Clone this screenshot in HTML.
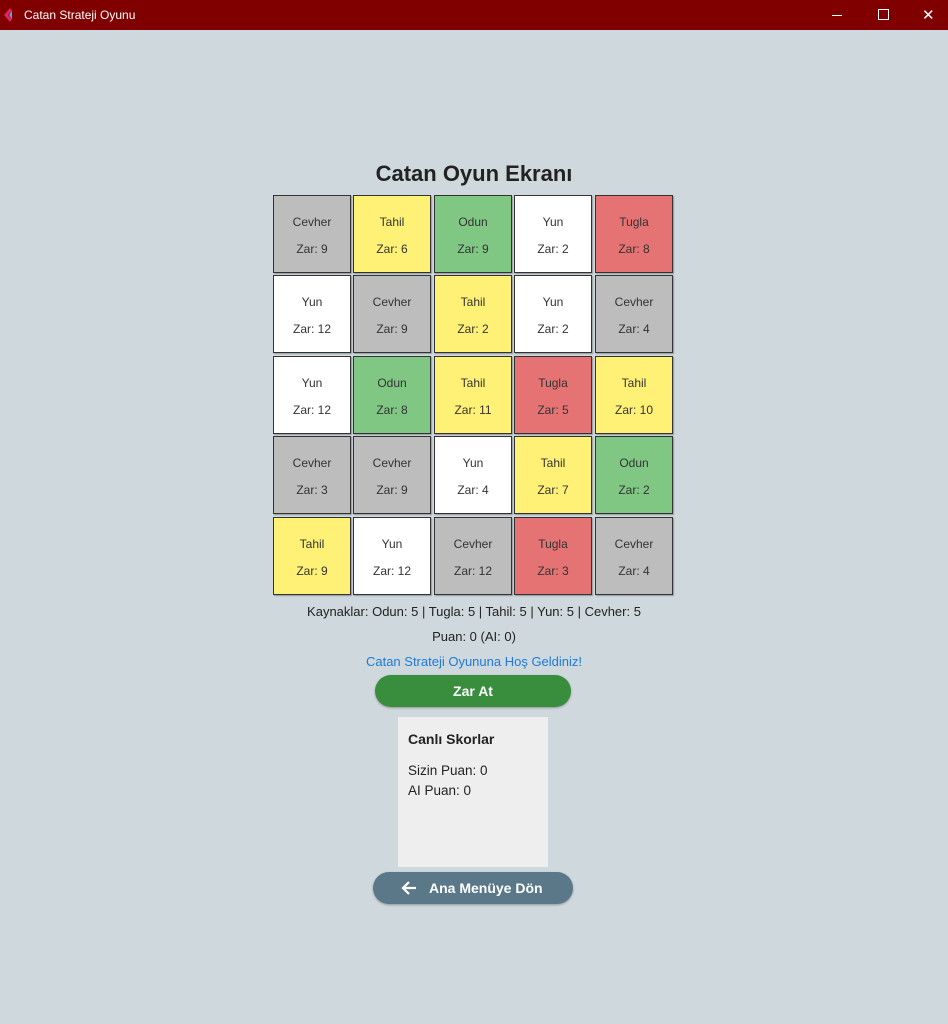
<!DOCTYPE html>
<html><head><meta charset="utf-8"><style>
body{margin:0;width:948px;height:1024px;background:#cfd8dd;font-family:"Liberation Sans",sans-serif;position:relative;overflow:hidden}
.tb{position:absolute;left:0;top:0;width:948px;height:30px;background:#800000;color:#fff;font-size:12px}
.c{position:absolute;width:76px;height:76px;border:1px solid #333;box-shadow:1px 1px 1px rgba(0,0,0,.3);font-size:12px;color:#333;text-align:center}
.c .a{position:absolute;top:19px;left:0;right:0}
.c .b{position:absolute;top:46px;left:0;right:0}
.g{background:#bdbdbd}.y{background:#fff176}.o{background:#81c784}.w{background:#fff}.r{background:#e57373}
.t{position:absolute;left:0;width:948px;text-align:center}
</style></head><body>
<div class="tb">
<svg style="position:absolute;left:4px;top:8px" width="12" height="14"><path d="M6 0 L0 7 L6 14 L8 11 L4 7 L8 3Z" fill="#e0245e"/><path d="M8 3 L5 7 L8 11Z" fill="#3fb6e0"/></svg>
<span style="position:absolute;left:24px;top:8px">Catan Strateji Oyunu</span>
<div style="position:absolute;left:832px;top:15px;width:10px;height:1px;background:#fff"></div>
<div style="position:absolute;left:878px;top:9px;width:9px;height:9px;border:1px solid #fff"></div>
<span style="position:absolute;left:922px;top:6px;font-size:15px">✕</span>
</div>
<div class="t" style="top:161px;font-size:22px;font-weight:bold;color:#222">Catan Oyun Ekranı</div>
<div id="grid"></div>
<div class="t" style="top:604px;font-size:13px;color:#222">Kaynaklar: Odun: 5 | Tugla: 5 | Tahil: 5 | Yun: 5 | Cevher: 5</div>
<div class="t" style="top:629px;font-size:13px;color:#222">Puan: 0 (AI: 0)</div>
<div class="t" style="top:654px;font-size:13px;color:#1e7ad6">Catan Strateji Oyununa Hoş Geldiniz!</div>
<div style="position:absolute;left:375px;top:675px;width:196px;height:32px;border-radius:16px;background:#388e3c;color:#fff;font-weight:bold;font-size:14px;text-align:center;line-height:32px;box-shadow:0 1px 2px rgba(0,0,0,.3)">Zar At</div>
<div style="position:absolute;left:398px;top:717px;width:150px;height:150px;background:#eee;color:#222">
<div style="position:absolute;left:10px;top:14px;font-weight:bold;font-size:14px">Canlı Skorlar</div>
<div style="position:absolute;left:10px;top:44px;font-size:13.5px;line-height:20px">Sizin Puan: 0<br>AI Puan: 0</div>
</div>
<div style="position:absolute;left:373px;top:872px;width:200px;height:32px;border-radius:16px;background:#5a7888;color:#fff;font-weight:bold;font-size:14px;line-height:32px;box-shadow:0 1px 2px rgba(0,0,0,.3)">
<svg style="position:absolute;left:28px;top:8px" width="16" height="16"><path d="M15 8H2M8 2L2 8l6 6" stroke="#fff" stroke-width="2.2" fill="none"/></svg>
<span style="position:absolute;left:56px">Ana Menüye Dön</span></div>
<script>
var d=[["g","Cevher",9],["y","Tahil",6],["o","Odun",9],["w","Yun",2],["r","Tugla",8],
["w","Yun",12],["g","Cevher",9],["y","Tahil",2],["w","Yun",2],["g","Cevher",4],
["w","Yun",12],["o","Odun",8],["y","Tahil",11],["r","Tugla",5],["y","Tahil",10],
["g","Cevher",3],["g","Cevher",9],["w","Yun",4],["y","Tahil",7],["o","Odun",2],
["y","Tahil",9],["w","Yun",12],["g","Cevher",12],["r","Tugla",3],["g","Cevher",4]];
var xs=[273,353,434,514,595],ys=[195,275,356,436,517],h="";
d.forEach(function(e,i){h+='<div class="c '+e[0]+'" style="left:'+xs[i%5]+'px;top:'+ys[Math.floor(i/5)]+'px"><div class="a">'+e[1]+'</div><div class="b">Zar: '+e[2]+'</div></div>'});
document.getElementById("grid").innerHTML=h;
</script>
</body></html>
